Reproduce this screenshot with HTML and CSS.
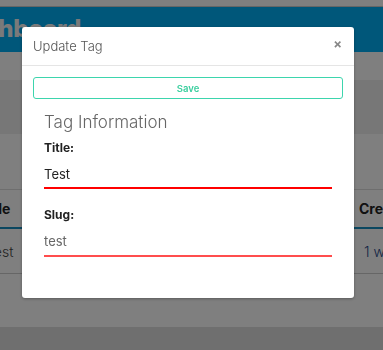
FILE: index.html
```html
<!DOCTYPE html>
<html lang="en">
<head>
  <meta charset="UTF-8">
  <meta name="viewport" content="width=device-width, initial-scale=1.0">
  <title>Update Tag</title>
  <link rel="stylesheet" href="styles.css">
</head>
<body>
  <div class="page">
    <div class="topstrip"></div>
    <header class="navbar">
      <h1>Dashboard</h1>
    </header>
    <div class="subbar"></div>
    <div class="toolbar"></div>
    <div class="spacer"></div>
    <table class="tags">
      <thead>
        <tr><th>Title</th><th class="created">Created</th></tr>
      </thead>
      <tbody>
        <tr><td>Test</td><td class="created ago">1 week ago</td></tr>
      </tbody>
    </table>
    <div class="filler"></div>
    <footer class="footer"></footer>
  </div>

  <div class="backdrop">
    <div class="modal">
      <div class="modal-header">
        <span class="modal-title">Update Tag</span>
        <span class="close">&times;</span>
      </div>
      <div class="modal-body">
        <button type="button" class="save">Save</button>
        <div class="section">
          <h2>Tag Information</h2>
          <label for="title">Title:</label>
          <input type="text" id="title" class="field invalid" value="Test">
          <label for="slug">Slug:</label>
          <input type="text" id="slug" class="field slug" value="test">
        </div>
      </div>
    </div>
  </div>
</body>
</html>
```

FILE: styles.css
```css
body {
  font-family: 'Inter', 'Liberation Sans', sans-serif;
  margin: 0;
  padding: 0;
  background: #fff;
  color: #333;
  overflow: hidden;
}
.page {
  height: 350px;
  display: flex;
  flex-direction: column;
}
.topstrip {
  height: 6px;
  background: #fff;
  border-bottom: 1px solid #ccc;
}
.navbar {
  height: 45px;
  background: #00aef4;
  overflow: hidden;
}
.navbar h1 {
  margin: 7px 0 0 -46px;
  font-size: 24px;
  font-weight: 800;
  color: #f4f4f4;
  letter-spacing: -0.3px;
}
.subbar {
  height: 28px;
}
.toolbar {
  height: 54px;
  background: #eee;
}
.spacer {
  height: 55px;
}
.tags {
  width: calc(100% + 60px);
  margin-left: -20px;
  table-layout: fixed;
  border-collapse: collapse;
  border-top: 1px solid #ddd;
  font-size: 14px;
  white-space: nowrap;
}
.tags th {
  height: 37px;
  text-align: left;
  font-weight: 700;
  color: #222;
  border-bottom: 2px solid #168ec0;
  padding: 0;
}
.tags td {
  height: 44px;
  color: #444;
  font-weight: 300;
  border-bottom: 1px solid #ccc;
  padding: 0 0 0 6px;
}
.tags .created {
  width: 64px;
}
.tags td.ago {
  color: #2a4a8a;
  padding-left: 5px;
}
.filler {
  flex: 1;
}
.footer {
  height: 23px;
  background: #dedede;
}
.backdrop {
  position: fixed;
  top: 0;
  left: 0;
  right: 0;
  bottom: 0;
  background: rgba(0, 0, 0, 0.5);
}
.modal {
  margin: 27px 0 0 22px;
  width: 332px;
  height: 271px;
  background: #fff;
  border-radius: 3px;
  box-shadow: 0 1px 3px rgba(0, 0, 0, 0.3);
}
.modal-header {
  height: 38px;
  border-bottom: 1px solid #e5e5e5;
  display: flex;
  align-items: center;
  justify-content: space-between;
  padding: 0 11px;
}
.modal-title {
  font-size: 13px;
  font-weight: 300;
  color: #555;
}
.close {
  font-size: 13px;
  font-weight: 700;
  color: #888;
  margin-top: -5px;
  margin-right: 1px;
}
.modal-body {
  padding: 11px;
}
.save {
  display: block;
  width: 100%;
  height: 22px;
  background: #fff;
  border: 1px solid #3dd5ad;
  border-radius: 3px;
  color: #3bcf9f;
  font-family: inherit;
  font-size: 9.5px;
  font-weight: 600;
}
.section {
  padding: 0 11px;
}
.section h2 {
  margin: 13px 0 0;
  font-size: 17px;
  font-weight: 300;
  color: #666;
}
label {
  display: block;
  margin-top: 8px;
  font-size: 12px;
  font-weight: 700;
  color: #222;
}
.field {
  display: block;
  width: 100%;
  box-sizing: border-box;
  border: none;
  border-bottom: 2px solid #f00;
  padding: 11px 0 5px;
  font-family: inherit;
  font-size: 13px;
  color: #222;
  outline: none;
  margin-bottom: 18px;
}
.field.slug {
  color: #666;
  padding-bottom: 6px;
  border-bottom-color: #ff4d4d;
}
```
